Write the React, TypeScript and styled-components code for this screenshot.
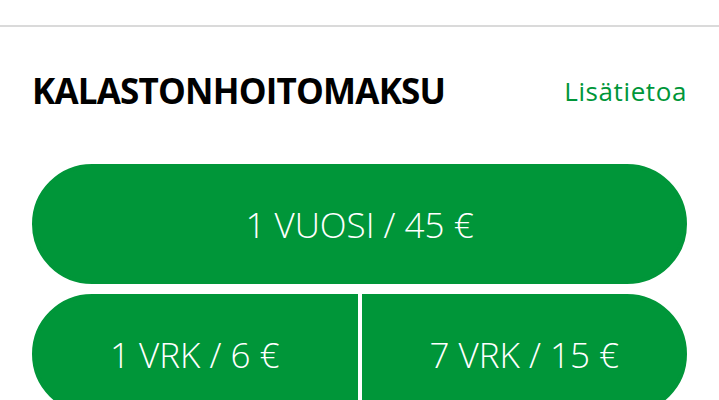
import React from 'react'
import styled, { createGlobalStyle } from 'styled-components'

const GlobalStyle = createGlobalStyle`
  html, body {
    margin: 0;
    padding: 0;
    background: #ffffff;
  }
  body {
    font-family: 'Open Sans', 'Noto Sans', sans-serif;
    overflow: hidden;
  }
`

const green = '#009639'

const Page = styled.div`
  width: 719px;
  height: 400px;
  overflow: hidden;
  background: #ffffff;
`

const TopBar = styled.div`
  height: 25px;
  border-bottom: 2px solid #dadada;
`

const Content = styled.div`
  padding: 0 32px;
`

const Header = styled.div`
  height: 127px;
  display: flex;
  align-items: center;
  justify-content: space-between;
`

const Title = styled.h2`
  margin: 0;
  font-size: 35px;
  font-weight: 700;
  color: #000000;
  line-height: 1;
  letter-spacing: -0.8px;
`

const InfoLink = styled.a`
  font-size: 26px;
  color: ${green};
  text-decoration: none;
  line-height: 1;
  letter-spacing: 0.6px;
`

const Stack = styled.div`
  display: flex;
  flex-direction: column;
  gap: 10px;
  padding-top: 10px;
`

const Row = styled.div`
  display: flex;
  gap: 4px;
`

type Side = 'both' | 'left' | 'right'

const PriceButton = styled.button<{ $round: Side }>`
  flex: 1;
  height: 120px;
  box-sizing: border-box;
  border: 4px solid ${green};
  background: ${green};
  color: #ffffff;
  font-family: 'Open Sans', 'Noto Sans', sans-serif;
  font-size: 35px;
  font-weight: 300;
  padding: 0;
  cursor: pointer;
  border-radius: ${({ $round }) =>
    $round === 'both' ? '60px' : $round === 'left' ? '60px 0 0 60px' : '0 60px 60px 0'};
`

export default function App() {
  return (
    <Page>
      <GlobalStyle />
      <TopBar />
      <Content>
        <Header>
          <Title>KALASTONHOITOMAKSU</Title>
          <InfoLink href="#">Lisätietoa</InfoLink>
        </Header>
        <Stack>
          <Row>
            <PriceButton $round="both">1 VUOSI / 45 €</PriceButton>
          </Row>
          <Row>
            <PriceButton $round="left">1 VRK / 6 €</PriceButton>
            <PriceButton $round="right">7 VRK / 15 €</PriceButton>
          </Row>
        </Stack>
      </Content>
    </Page>
  )
}
